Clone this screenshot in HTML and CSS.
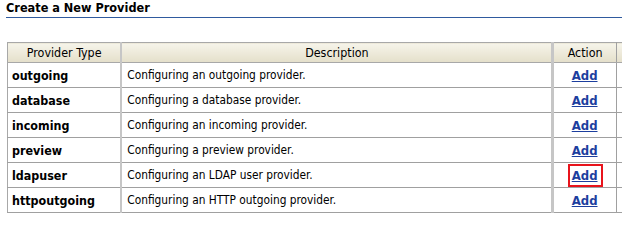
FILE: index.html
```html
<!DOCTYPE html>
<html>
<head>
<meta charset="utf-8">
<link rel="stylesheet" href="styles.css">
</head>
<body>
<div class="page">
  <h1 class="title">Create a New Provider</h1>
  <table class="grid">
    <thead>
      <tr>
        <th class="c-type">Provider Type</th>
        <th class="c-desc">Description</th>
        <th class="c-act">Action</th>
        <th class="c-extra"></th>
      </tr>
    </thead>
    <tbody>
      <tr><td class="c-type">outgoing</td><td class="c-desc">Configuring an outgoing provider.</td><td class="c-act"><a href="#">Add</a></td><td class="c-extra"></td></tr>
      <tr><td class="c-type">database</td><td class="c-desc">Configuring a database provider.</td><td class="c-act"><a href="#">Add</a></td><td class="c-extra"></td></tr>
      <tr><td class="c-type">incoming</td><td class="c-desc">Configuring an incoming provider.</td><td class="c-act"><a href="#">Add</a></td><td class="c-extra"></td></tr>
      <tr><td class="c-type">preview</td><td class="c-desc">Configuring a preview provider.</td><td class="c-act"><a href="#">Add</a></td><td class="c-extra"></td></tr>
      <tr><td class="c-type">ldapuser</td><td class="c-desc">Configuring an LDAP user provider.</td><td class="c-act"><a href="#" class="hl">Add</a></td><td class="c-extra"></td></tr>
      <tr><td class="c-type">httpoutgoing</td><td class="c-desc">Configuring an HTTP outgoing provider.</td><td class="c-act"><a href="#">Add</a></td><td class="c-extra"></td></tr>
    </tbody>
  </table>
</div>
</body>
</html>
```

FILE: styles.css
```css
html, body {
  margin: 0;
  padding: 0;
  background: #ffffff;
  overflow: hidden;
}
.page {
  width: 640px;
  padding: 0 0 0 6px;
  font-family: "DejaVu Sans Condensed", "DejaVu Sans", sans-serif;
  color: #000;
}
.title {
  margin: 0;
  padding: 1px 0 2px 0;
  font-size: 12.6px;
  font-weight: bold;
  line-height: 14px;
  color: #000;
  border-bottom: 1px solid #2f5a9e;
}
.grid {
  margin: 24px 0 0 1px;
  border-collapse: collapse;
  font-size: 11.8px;
  table-layout: fixed;
}
.grid th {
  height: 19px;
  padding: 0;
  font-weight: normal;
  font-size: 12.4px;
  text-align: center;
  background: linear-gradient(#f6f4ea, #e4dfca);
  border-top: 1px solid #a8a8a8;
  border-bottom: 1px solid #a8a8a8;
}
.grid td {
  height: 24px;
  padding: 0;
  border-bottom: 1px solid #a0a0a0;
}
.c-type {
  width: 109px;
  border-left: 1px solid #a8a8a8;
  border-right: 2px solid #c6c6c6;
}
td.c-type {
  padding-left: 4px !important;
  font-weight: bold;
  font-size: 12.4px;
}
.c-desc {
  width: 434px;
  border-right: 3px solid #c6c6c6;
}
td.c-desc {
  padding-left: 5px !important;
}
.c-act {
  width: 62px;
  text-align: center;
  border-right: 1px solid #a0a0a0;
}
.c-extra {
  width: 30px;
}
.c-act a {
  color: #1c3e9e;
  font-weight: bold;
  font-size: 13px;
  text-decoration: underline;
  display: inline-block;
  padding: 2px 3px 2px 2px;
  border: 2px solid transparent;
}
.c-act a.hl {
  border-color: #e8141c;
}
```
